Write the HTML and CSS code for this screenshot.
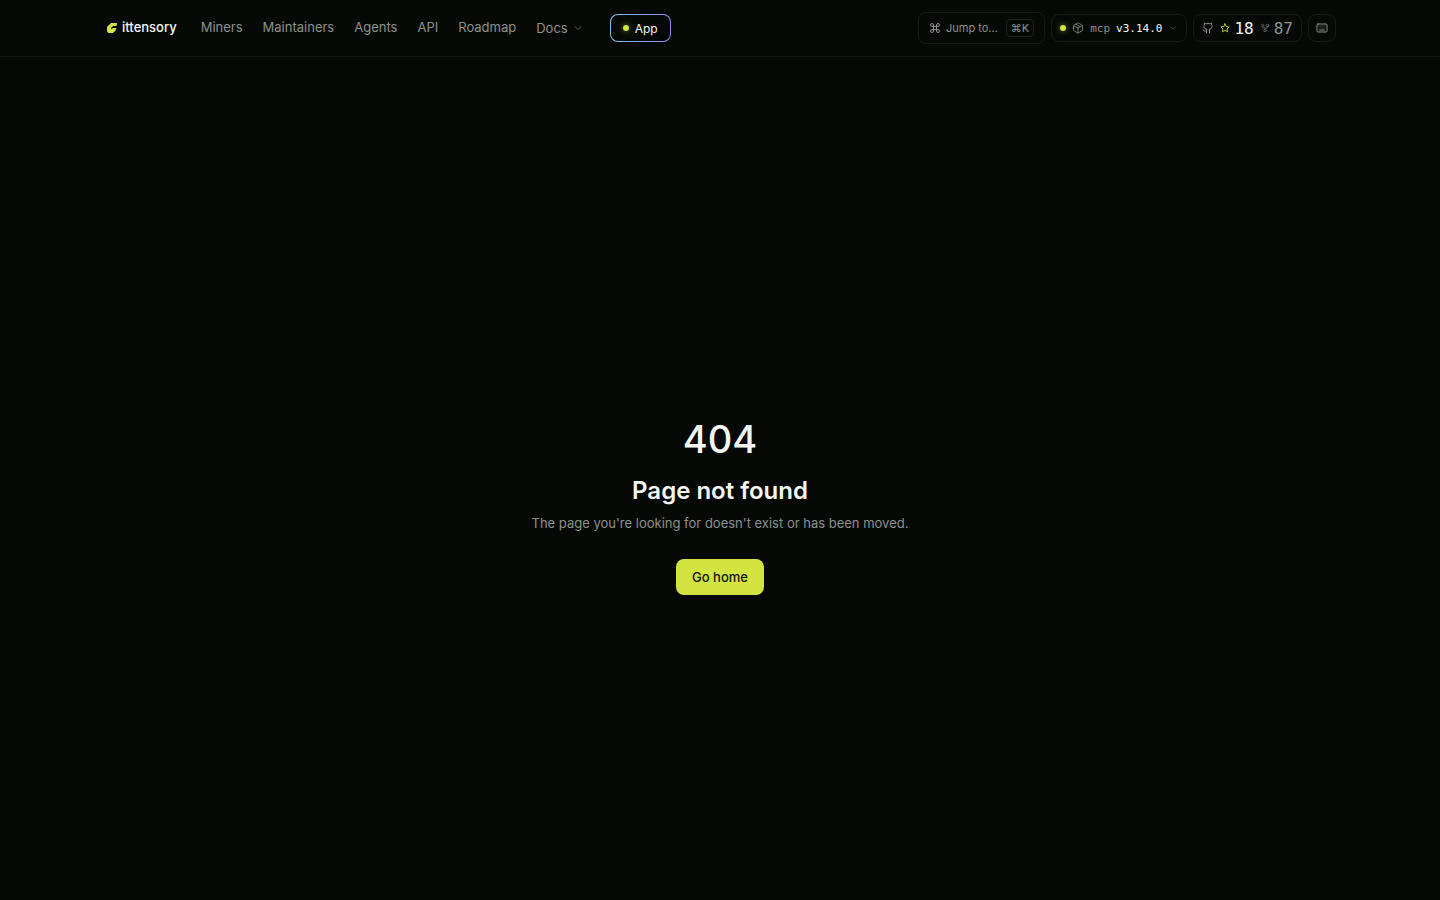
FILE: index.html
```html
<!DOCTYPE html>
<html lang="en">
<head>
    <meta charset="UTF-8">
    <meta name="viewport" content="width=device-width, initial-scale=1">
    <title>Page not found - Gittensory</title>
    <link rel="stylesheet" href="styles.css">
</head>
<body>
    <header class="site-header">
        <div class="header-inner">
            <a class="brand" href="/">
                <svg class="brand-mark" viewBox="0 0 10 10" aria-hidden="true">
                    <path d="M4 0h6L9.500 3H6.200L4.300 4.600V6.200L6 5h3.500L8.200 8 6 10H1.500L0 8.500V4z"/>
                </svg>
                <span>ittensory</span>
            </a>

            <nav class="main-nav">
                <a href="/miners">Miners</a>
                <a href="/maintainers">Maintainers</a>
                <a href="/agents">Agents</a>
                <a href="/api">API</a>
                <a href="/roadmap">Roadmap</a>
                <button class="docs-button" type="button">Docs
                    <svg class="icon chevron" viewBox="0 0 24 24"><path d="m6 9 6 6 6-6"/></svg>
                </button>
            </nav>

            <a class="app-link" href="/app"><span class="dot"></span>App</a>

            <div class="tools">
                <button class="jump-button" type="button">
                    <svg class="icon" viewBox="0 0 24 24"><path d="M15 6v12a3 3 0 1 0 3-3H6a3 3 0 1 0 3 3V6a3 3 0 1 0-3 3h12a3 3 0 1 0-3-3"/></svg>
                    <span>Jump to…</span>
                    <kbd>⌘K</kbd>
                </button>

                <button class="version-button" type="button">
                    <span class="dot"></span>
                    <svg class="icon package" viewBox="0 0 24 24"><path d="M11 21.7a2 2 0 0 0 2 0l7-4a2 2 0 0 0 1-1.7V8a2 2 0 0 0-1-1.7l-7-4a2 2 0 0 0-2 0l-7 4A2 2 0 0 0 3 8v8a2 2 0 0 0 1 1.7zM12 22V12M3.3 7 12 12l8.7-5M7.5 4.3l9 5.1"/></svg>
                    <span>mcp</span>
                    <strong>v3.14.0</strong>
                    <svg class="icon small chevron" viewBox="0 0 24 24"><path d="m6 9 6 6 6-6"/></svg>
                </button>

                <a class="repo-link" href="/github" aria-label="GitHub repository">
                    <svg class="icon" viewBox="0 0 24 24"><path d="M15 22v-4a4.8 4.8 0 0 0-1-3.5c3 0 6-2 6-5.5.1-1.3-.3-2.5-1-3.5.3-1.2.3-2.4 0-3.5 0 0-1 0-3 1.5-2.6-.5-5.4-.5-8 0C6 2 5 2 5 2c-.3 1.2-.3 2.4 0 3.5A5.4 5.4 0 0 0 4 9c0 3.5 3 5.5 6 5.5-.4.5-.7 1.1-.9 1.7-.1.6-.1 1.2-.1 1.8v4M9 18c-4.5 2-5-2-7-2"/></svg>
                    <span class="stat stars">
                        <svg class="icon small" viewBox="0 0 24 24"><path d="m12 2 3.1 6.3 6.9 1-5 4.9 1.2 6.8-6.2-3.2L5.8 21 7 14.2 2 9.3l6.900-1z"/></svg>
                        <span>18</span>
                    </span>
                    <span class="stat">
                        <svg class="icon small fork" viewBox="0 0 24 24"><circle cx="12" cy="18" r="3"/><circle cx="6" cy="6" r="3"/><circle cx="18" cy="6" r="3"/><path d="M18 9v2c0 .6-.4 1-1 1H7c-.6 0-1-.4-1-1V9M12 12v3"/></svg>
                        <span>87</span>
                    </span>
                </a>

                <button class="keys-button" type="button" aria-label="Keyboard shortcuts">
                    <svg class="icon" viewBox="0 0 24 24"><rect x="2" y="4" width="20" height="16" rx="2"/><path d="M6 8h.01M10 8h.01M14 8h.01M18 8h.01M8 12h.01M12 12h.01M16 12h.01M7 16h10"/></svg>
                </button>
            </div>
        </div>
    </header>

    <main class="not-found">
        <h1>404</h1>
        <h2>Page not found</h2>
        <p>The page you're looking for doesn't exist or has been moved.</p>
        <a class="home-link" href="/">Go home</a>
    </main>
</body>
</html>
```

FILE: styles.css
```css
* {
    box-sizing: border-box;
}
body {
    margin: 0;
    min-height: 100vh;
    display: flex;
    flex-direction: column;
    background: #060906;
    color: #f4f6f2;
    font-family: "Inter", "Liberation Sans", sans-serif;
}
a {
    color: inherit;
    text-decoration: none;
}
button {
    font: inherit;
    color: inherit;
    background: none;
    border: none;
    padding: 0;
    cursor: pointer;
}
.icon {
    width: 12px;
    height: 12px;
    flex-shrink: 0;
    fill: none;
    stroke: currentColor;
    stroke-width: 2;
    stroke-linecap: round;
    stroke-linejoin: round;
}
.icon.small {
    width: 10px;
    height: 10px;
}
.dot {
    width: 6px;
    height: 6px;
    flex-shrink: 0;
    border-radius: 50%;
    background: #d2e440;
    box-shadow: 0 0 6px rgba(210, 228, 64, 0.6);
}

/* Header */
.site-header {
    border-bottom: 1px solid #121512;
}
.header-inner {
    display: flex;
    align-items: center;
    width: 100%;
    max-width: 1280px;
    height: 56px;
    margin: 0 auto;
    padding: 0 24px;
}
.brand {
    display: flex;
    align-items: center;
    gap: 5px;
    margin-left: 3px;
    font-size: 13px;
    font-weight: 500;
}
.brand-mark {
    width: 10px;
    height: 10px;
    fill: #d2e440;
}
.brand span,
.main-nav a {
    padding-bottom: 2px;
}
.main-nav {
    display: flex;
    align-items: center;
    gap: 20px;
    margin-left: 24px;
    font-size: 13px;
    color: #8d918c;
}
.docs-button {
    display: flex;
    align-items: center;
    gap: 4px;
}
.chevron {
    opacity: 0.6;
}
.app-link {
    display: flex;
    align-items: center;
    gap: 6px;
    height: 28px;
    margin-left: 26px;
    padding: 0 12px;
    border: 1px solid transparent;
    border-radius: 8px;
    background: linear-gradient(#060906, #060906) padding-box, linear-gradient(90deg, #7cc4ee, #9a86ee) border-box;
    font-size: 12px;
}
.tools {
    display: flex;
    align-items: center;
    gap: 6px;
    margin-left: auto;
    color: #8d918c;
}
.jump-button,
.version-button,
.repo-link,
.keys-button {
    display: flex;
    align-items: center;
    height: 28px;
    border: 1px solid #171a17;
    border-radius: 8px;
}
.jump-button {
    gap: 5px;
    height: 32px;
    padding: 0 10px;
    font-size: 11px;
}
.jump-button kbd {
    margin-left: 3px;
    padding: 0 4px;
    border: 1px solid #1f221f;
    border-radius: 4px;
    font: 11px/16px "Inter", sans-serif;
}
.version-button {
    gap: 6px;
    padding: 0 8px;
    font: 11px "DejaVu Sans Mono", monospace;
}
.version-button strong {
    color: #f4f6f2;
    font-weight: 400;
}
.package {
    opacity: 0.8;
}
.repo-link {
    gap: 6px;
    padding: 0 8px;
    font: 16px "DejaVu Sans Mono", monospace;
}
.stat {
    display: flex;
    align-items: center;
    gap: 4px;
}
.stars {
    color: #f4f6f2;
}
.stars .icon {
    color: #d2e440;
}
.fork {
    opacity: 0.7;
}
.keys-button {
    justify-content: center;
    width: 28px;
}

/* 404 message */
.not-found {
    flex: 1;
    display: flex;
    flex-direction: column;
    align-items: center;
    justify-content: center;
    padding: 56px 16px 0;
    text-align: center;
}
.not-found h1 {
    margin: 0;
    font-size: 38px;
    line-height: 40px;
    font-weight: 500;
}
.not-found h2 {
    margin: 16px 0 0;
    font-size: 24px;
    line-height: 32px;
    font-weight: 600;
}
.not-found p {
    margin: 6px 0 0;
    font-size: 13px;
    line-height: 20px;
    color: #8d918c;
}
.home-link {
    margin-top: 26px;
    padding: 8px 16px;
    border-radius: 8px;
    background: #d2e440;
    color: #101408;
    font-size: 13px;
    line-height: 20px;
    font-weight: 500;
}
```
